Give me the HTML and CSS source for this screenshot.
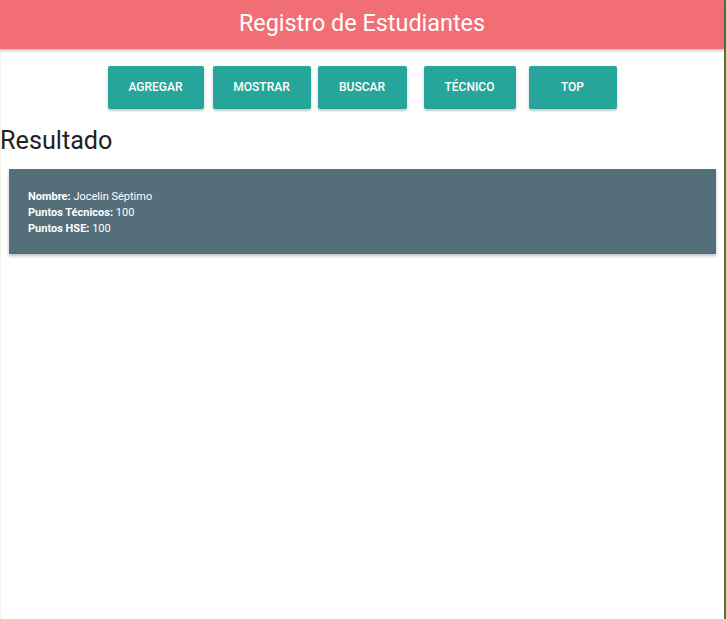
FILE: index.html
```html
<!DOCTYPE html>
<html lang="es">
<head>
<meta charset="utf-8">
<title>Registro de Estudiantes</title>
<link rel="stylesheet" href="styles.css">
</head>
<body>
<div class="frame">
  <header class="topbar">
    <h1 class="title">Registro de Estudiantes</h1>
  </header>
  <nav class="actions">
    <button class="btn btn-agregar">AGREGAR</button>
    <button class="btn btn-mostrar">MOSTRAR</button>
    <button class="btn btn-buscar">BUSCAR</button>
    <button class="btn btn-tecnico">TÉCNICO</button>
    <button class="btn btn-top">TOP</button>
  </nav>
  <h2 class="section-title">Resultado</h2>
  <div class="card">
    <div class="line"><b>Nombre:</b> Jocelin Séptimo</div>
    <div class="line"><b>Puntos Técnicos:</b> 100</div>
    <div class="line"><b>Puntos HSE:</b> 100</div>
  </div>
</div>
</body>
</html>
```
FILE: styles.css
```css
html, body {
  margin: 0;
  padding: 0;
  height: 100%;
  background: #ffffff;
}
body {
  font-family: Roboto, "Liberation Sans", sans-serif;
  color: #222;
}
.frame {
  box-sizing: border-box;
  width: 726px;
  min-height: 619px;
  border-left: 1px solid #eef4ea;
  border-right: 2px solid #4b7a2c;
}
.topbar {
  height: 49px;
  background: #f06e74;
  box-shadow: 0 2px 2px rgba(0,0,0,0.22);
  display: flex;
  align-items: center;
  justify-content: center;
  margin-left: -1px;
}
.title {
  margin: 0;
  color: #fff;
  font-weight: 400;
  font-size: 23.4px;
  line-height: 1;
  padding-bottom: 1px;
}
.actions {
  display: flex;
  justify-content: center;
  padding-top: 17px;
  margin-left: -1px;
}
.btn {
  height: 43px;
  border: none;
  border-radius: 2px;
  background: #26a69a;
  color: #fff;
  font-family: Roboto, "Liberation Sans", sans-serif;
  font-weight: 500;
  font-size: 12px;
  padding: 0 0 2px 0;
  box-shadow: 0 2px 2px rgba(0,0,0,0.14), 0 1px 4px rgba(0,0,0,0.12);
}
.btn-agregar { width: 96px; }
.btn-mostrar { width: 98px; margin-left: 9px; }
.btn-buscar { width: 89px; margin-left: 7px; }
.btn-tecnico { width: 92px; margin-left: 17px; }
.btn-top { width: 88px; margin-left: 13px; }
.section-title {
  margin: 17px 0 0 -1px;
  font-weight: 400;
  font-size: 25.2px;
  line-height: 29px;
  color: #222;
}
.card {
  margin: 14px 8px 0 8px;
  background: #546e7a;
  color: #fff;
  padding: 20px 19px 17px 19px;
  font-size: 11px;
  line-height: 16px;
  box-shadow: 0 2px 3px rgba(0,0,0,0.25);
}
.card b {
  font-weight: 700;
}
```
